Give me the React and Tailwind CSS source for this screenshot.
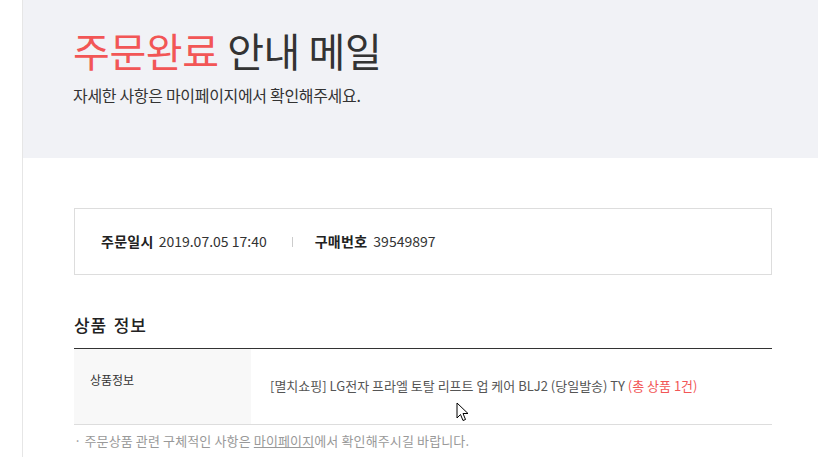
import React from 'react';

const font = { fontFamily: '"Noto Sans CJK KR", "Noto Sans", sans-serif' };

const Cursor = () => (
    <svg className="absolute left-[456px] top-[402px]" width="14" height="21" viewBox="0 0 14 21">
        <path d="M1 1 L1 16 L4.5 12.5 L7 18.5 L9.5 17.5 L7 11.5 L12 11.5 Z" fill="#fff" stroke="#000" strokeWidth="1" strokeLinejoin="round" />
    </svg>
);

const App = () => {
    return (
        <div className="relative w-[818px] h-[457px] overflow-hidden bg-white" style={font}>
            <div className="ml-[22px] w-[800px] border-l border-[#e6e6e6] min-h-[457px]">
                {/* Header */}
                <div className="bg-[#f1f2f6] h-[158px] px-[50px] pt-[24px]">
                    <h1 className="text-[40px] leading-[52px] tracking-[-0.01em] text-[#333] font-normal">
                        <span className="text-[#f25656]">주문완료</span> 안내 메일
                    </h1>
                    <p className="mt-[8px] text-[16px] leading-[22px] tracking-[-0.02em] text-[#333]">
                        자세한 사항은 마이페이지에서 확인해주세요.
                    </p>
                </div>

                {/* Body */}
                <div className="px-[50px] pt-[50px]">
                    <div className="ml-[1px] w-[698px] h-[67px] border border-[#dddddd] flex items-center px-[26px] text-[14px] text-[#333]">
                        <span className="font-bold text-[14px] text-[#222] tracking-[0.02em]">주문일시</span>
                        <span className="ml-[5px]">2019.07.05 17:40</span>
                        <span className="ml-[25px] mr-[22px] w-px h-[10px] bg-[#cccccc]"></span>
                        <span className="font-bold text-[14px] text-[#222] tracking-[0.02em]">구매번호</span>
                        <span className="ml-[6px]">39549897</span>
                    </div>

                    <h2 className="mt-[38px] ml-[1px] text-[17px] leading-[24px] font-medium text-[#222] tracking-[0.05em] [word-spacing:2px]">
                        상품 정보
                    </h2>

                    <div className="mt-[11px] ml-[1px] w-[698px] border-t border-[#333] border-b border-b-[#dddddd] flex h-[77px]">
                        <div className="w-[177px] bg-[#f8f8f8] pl-[16px] pt-[22px] text-[12px] text-[#333]">
                            상품정보
                        </div>
                        <div className="flex-1 pl-[19px] pt-[27px] text-[13px] text-[#555]">
                            [멸치쇼핑] LG전자 프라엘 토탈 리프트 업 케어 BLJ2 (당일발송) TY{' '}
                            <span className="text-[#f25656]">(총 상품 1건)</span>
                        </div>
                    </div>

                    <p className="mt-[6px] ml-[1px] text-[13px] text-[#999] tracking-[0.01em]">
                        · 주문상품 관련 구체적인 사항은 <span className="underline">마이페이지</span>에서 확인해주시길 바랍니다.
                    </p>
                </div>
            </div>
            <Cursor />
        </div>
    );
};

export default App;
